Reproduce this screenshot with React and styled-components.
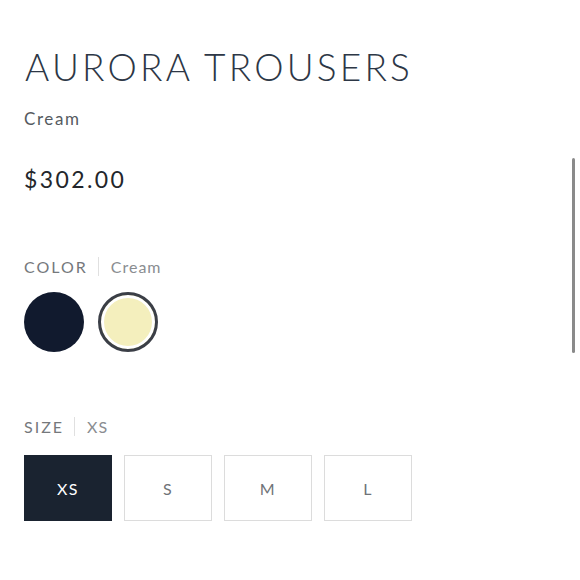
import styled, { createGlobalStyle } from 'styled-components';

const Global = createGlobalStyle`
    body {
        margin: 0;
        background: #ffffff;
        font-family: 'Lato', 'Open Sans', sans-serif;
    }
`;

const sizes = ['XS', 'S', 'M', 'L'];

export default function App() {
    return (
        <>
            <Global />
            <Page>
                <Title>AURORA TROUSERS</Title>
                <Subtitle>Cream</Subtitle>
                <Price>$302.00</Price>
                <OptionLabel spacing={62}>
                    <Name>COLOR</Name>
                    <Divider />
                    <Value>Cream</Value>
                </OptionLabel>
                <Swatches>
                    <Swatch color={'#111a2e'} />
                    <Swatch color={'#f4efbd'} selected />
                </Swatches>
                <OptionLabel spacing={0}>
                    <Name>SIZE</Name>
                    <Divider />
                    <Value>XS</Value>
                </OptionLabel>
                <Sizes>
                    {sizes.map(s => (
                        <SizeButton key={s} active={s === 'XS'}>{s}</SizeButton>
                    ))}
                </Sizes>
            </Page>
            <ScrollThumb />
        </>
    )
};

const Page = styled.div`
    width: 580px;
    height: 580px;
    box-sizing: border-box;
    padding: 43px 24px 0 24px;
    display: flex;
    flex-direction: column;
    align-items: flex-start;
`;

const Title = styled.h1`
    margin: 0;
    font-family: 'Lato', sans-serif;
    font-weight: 300;
    font-size: 37px;
    letter-spacing: 3.2px;
    color: #2d3746;
    line-height: 48px;
    margin-left: 1px;
`;

const Subtitle = styled.div`
    margin-top: 17px;
    font-size: 17px;
    color: #555a60;
    line-height: 22px;
    letter-spacing: 1.6px;
`;

const Price = styled.div`
    margin-top: 35px;
    font-size: 23px;
    color: #23262b;
    letter-spacing: 2.4px;
    line-height: 28px;
`;

const OptionLabel = styled.div`
    margin-top: ${props => props.spacing}px;
    display: flex;
    align-items: center;
    height: 22px;
    font-size: 16px;
`;

const Name = styled.span`
    color: #75787c;
    letter-spacing: 2px;
`;

const Divider = styled.span`
    width: 1px;
    height: 19px;
    background: #e0e0e0;
    margin: 0 12px 0 10px;
`;

const Value = styled.span`
    color: #8a8d91;
    letter-spacing: 1px;
`;

const Swatches = styled.div`
    display: flex;
    gap: 14px;
    margin-top: 15px;
    margin-bottom: 63px;
`;

const Swatch = styled.div`
    width: 60px;
    height: 60px;
    border-radius: 50%;
    box-sizing: border-box;
    background: ${props => props.color};
    border: ${props => props.selected ? '3px solid #3b3f47' : 'none'};
    box-shadow: ${props => props.selected ? 'inset 0 0 0 3px #ffffff' : 'none'};
`;

const Sizes = styled.div`
    display: flex;
    gap: 12px;
    margin-top: 18px;
`;

const SizeButton = styled.div`
    width: 88px;
    height: 66px;
    box-sizing: border-box;
    display: flex;
    align-items: center;
    justify-content: center;
    font-size: 16px;
    letter-spacing: 1.5px;
    color: ${props => props.active ? '#ffffff' : '#6f7378'};
    background: ${props => props.active ? '#1a2330' : '#ffffff'};
    border: 1.5px solid ${props => props.active ? '#1a2330' : '#dcdcdc'};
`;

const ScrollThumb = styled.div`
    position: fixed;
    right: 5px;
    top: 158px;
    width: 3px;
    height: 195px;
    border-radius: 2px;
    background: #8a8a8a;
`;
